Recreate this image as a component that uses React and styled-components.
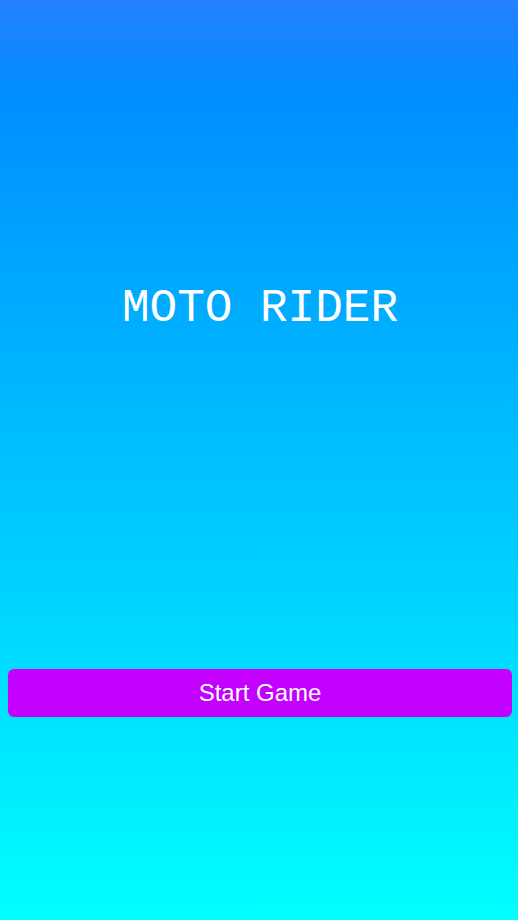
import styled, { createGlobalStyle } from "styled-components";

const GlobalStyle = createGlobalStyle`
  html, body {
    margin: 0;
    padding: 0;
  }
  body {
    font-family: "Liberation Sans", Arial, sans-serif;
  }
`;

export default function App() {
  return (
    <>
      <GlobalStyle />
      <Screen>
        <Hero>
          <Title>MOTO RIDER</Title>
        </Hero>
        <StartButton type="button">Start Game</StartButton>
      </Screen>
    </>
  );
}

const Screen = styled.div`
  height: 100vh;
  box-sizing: border-box;
  padding: 0 6px 0 8px;
  display: flex;
  flex-direction: column;
  background: linear-gradient(#2680ff 0%, #008eff 10%, #00ffff 100%);
`;

const Hero = styled.div`
  height: 618px;
  display: flex;
  align-items: center;
  justify-content: center;
`;

const Title = styled.h1`
  margin: 0;
  font-family: "Liberation Mono", "Courier New", monospace;
  font-size: 46px;
  font-weight: 400;
  color: #fff;
`;

const StartButton = styled.button`
  margin-top: 51px;
  height: 48px;
  width: 100%;
  border: none;
  border-radius: 6px;
  background: #c400ff;
  color: #fff;
  font-family: "Liberation Sans", Arial, sans-serif;
  font-size: 24px;
  cursor: pointer;
`;
